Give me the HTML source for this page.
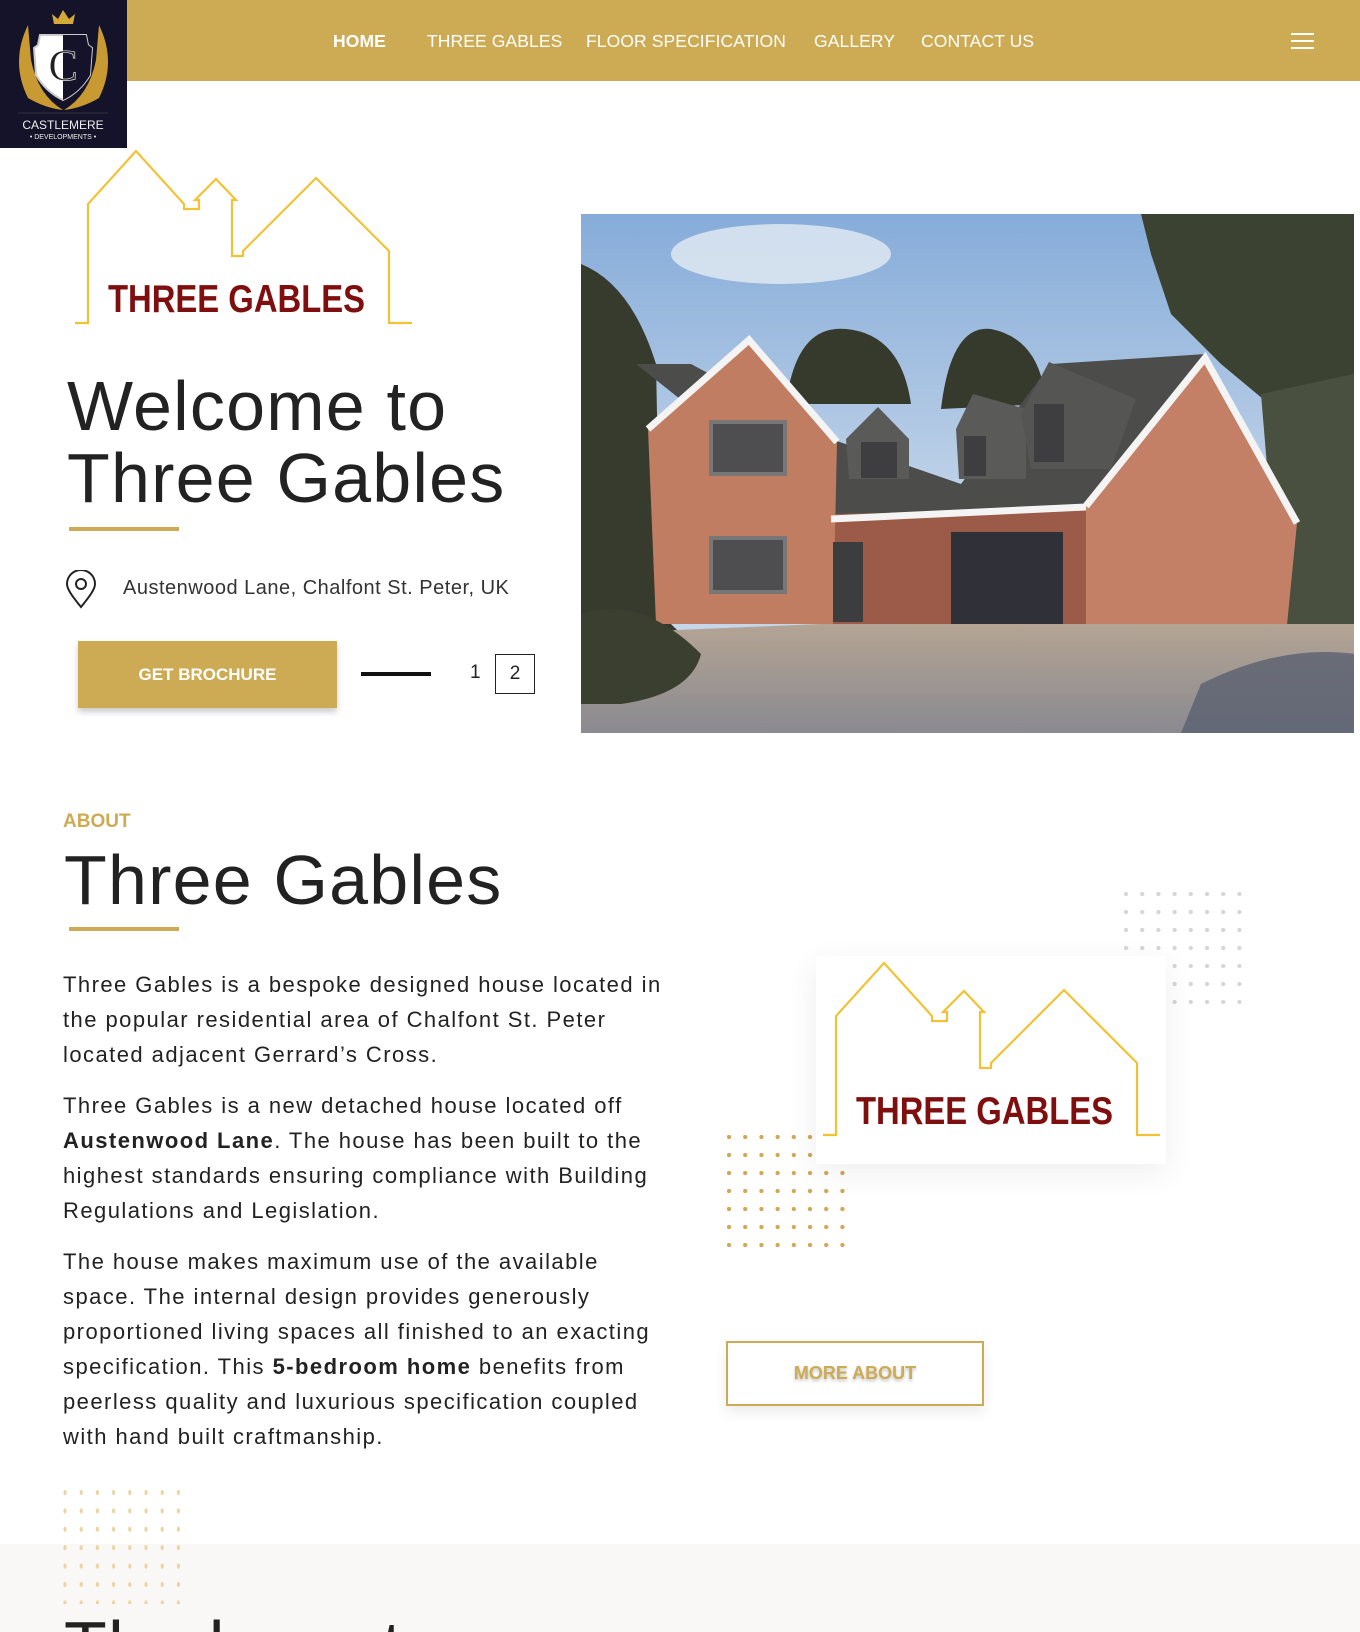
<!DOCTYPE html>
<html><head><meta charset="utf-8">
<style>
*{margin:0;padding:0;box-sizing:border-box}
html,body{width:1360px;height:1632px;overflow:hidden;background:#fff;font-family:"Liberation Sans",sans-serif;color:#222}
#w{position:relative;width:1360px;height:1632px;overflow:hidden}
.abs{position:absolute}
.nav{left:0;top:0;width:1360px;height:81px;background:#cdab55}
.nav a{position:absolute;top:31px;color:#fff;font-size:17.5px;text-decoration:none;letter-spacing:0.1px}
.logo{left:0;top:0;width:127px;height:148px;background:#15132a}
.h1{left:67px;font-size:70px;color:#222;letter-spacing:1.2px;font-weight:normal;white-space:nowrap}
.bar{height:4px;background:#cdab55}
.p{left:63px;font-size:22px;letter-spacing:1.45px;line-height:35px;color:#222;white-space:nowrap}
</style></head><body><div id="w">
<div class="abs nav">
<a style="left:333px;font-weight:bold">HOME</a>
<a style="left:427px">THREE GABLES</a>
<a style="left:586px">FLOOR SPECIFICATION</a>
<a style="left:814px">GALLERY</a>
<a style="left:921px">CONTACT US</a>
<div class="abs" style="left:1291px;top:33px;width:23px;height:2px;background:#fff"></div>
<div class="abs" style="left:1291px;top:40px;width:23px;height:2px;background:#fff"></div>
<div class="abs" style="left:1291px;top:47px;width:23px;height:2px;background:#fff"></div>
</div>
<div class="abs logo">
<svg width="127" height="148" viewBox="0 0 127 148">
<path d="M52 14 L54 24 L73 24 L75 14 L69 19 L63 10 L58 19 Z" fill="#d4a93a"/>
<path d="M28 25 Q10 62 28 98 Q45 108 63 110 Q38 95 31 60 Z" fill="#c99a32"/>
<path d="M99 25 Q117 62 99 98 Q82 108 64 110 Q89 95 96 60 Z" fill="#c99a32"/>
<path d="M40 35 L86 35 L88 45 L92 48 L90 75 Q80 92 63 100 Q46 92 36 75 L34 48 L38 45 Z" fill="#fff" stroke="#ccc" stroke-width="2"/>
<path d="M63 35 L86 35 L88 45 L92 48 L90 75 Q80 92 63 100 Z" fill="#15132a"/>
<text x="63" y="80" font-family="Liberation Serif" font-size="44" fill="#222" text-anchor="middle" stroke="#fff" stroke-width="0.6">C</text>
<line x1="18" y1="113" x2="108" y2="113" stroke="#555" stroke-width="0.6"/>
<text x="63" y="129" font-size="12" fill="#eee" text-anchor="middle">CASTLEMERE</text>
<text x="63" y="139" font-size="7" fill="#eee" text-anchor="middle">• DEVELOPMENTS •</text>
</svg>
</div>

<svg class="abs" style="left:0;top:0" width="1360" height="1632">
<defs>
<g id="tg">
<path d="M75 323 L88 323 L88 204 L136 151 L184 204 L184 209 L199 209 L199 200 L195 200 L216 179 L236 200 L232 200 L232 256 L243 256 L243 251 L316 178 L389 251 L389 323 L412 323" fill="none" stroke="#f3c234" stroke-width="2.2"/>
<text x="108" y="312" font-size="39" font-weight="bold" fill="#7f0e0e" textLength="257" lengthAdjust="spacingAndGlyphs">THREE GABLES</text>
</g>
<pattern id="gd" x="1124" y="892" width="16.2" height="18" patternUnits="userSpaceOnUse"><circle cx="2" cy="2" r="2.2" fill="#d6d6d6"/></pattern>
<pattern id="od" x="727" y="1135" width="16.2" height="18" patternUnits="userSpaceOnUse"><circle cx="2" cy="2" r="2.2" fill="#d4a656"/></pattern>
<pattern id="ld" x="63" y="1490" width="16.2" height="18.4" patternUnits="userSpaceOnUse"><ellipse cx="2" cy="2.5" rx="1.6" ry="2.6" fill="#ecd3a0"/></pattern>
</defs>
<use href="#tg"/>
<rect x="0" y="1544" width="1360" height="88" fill="#f9f8f6"/>
<rect x="1122" y="890" width="120" height="114" fill="url(#gd)"/>
<rect x="725" y="1133" width="120" height="114" fill="url(#od)"/>
<rect x="61" y="1488" width="122" height="116" fill="url(#ld)"/>
</svg>

<div class="abs" style="left:816px;top:956px;width:350px;height:208px;background:#fff;box-shadow:0 8px 30px rgba(0,0,0,0.07)"></div>
<svg class="abs" style="left:0;top:0;pointer-events:none" width="1360" height="1632"><use href="#tg" transform="translate(748,812)"/></svg>

<div class="abs h1" style="top:370px;line-height:72px">Welcome to<br>Three Gables</div>
<div class="abs bar" style="left:69px;top:527px;width:110px"></div>
<svg class="abs" style="left:64px;top:570px" width="34" height="40" viewBox="0 0 34 40"><path d="M17 37 C8 26 3 19 3 14 A14 14 0 0 1 31 14 C31 19 26 26 17 37 Z" fill="none" stroke="#222" stroke-width="2"/><circle cx="17" cy="14" r="5" fill="none" stroke="#222" stroke-width="2"/></svg>
<div class="abs" style="left:123px;top:577px;font-size:20px;letter-spacing:0.5px;color:#333">Austenwood Lane, Chalfont St. Peter, UK</div>
<div class="abs" style="left:78px;top:641px;width:259px;height:67px;background:#cdab55;box-shadow:0 4px 6px rgba(0,0,0,0.2);color:#fff;font-weight:bold;font-size:17px;text-align:center;line-height:67px">GET BROCHURE</div>
<div class="abs" style="left:361px;top:672px;width:70px;height:4px;background:#111"></div>
<div class="abs" style="left:470px;top:662px;font-size:19px;color:#222">1</div>
<div class="abs" style="left:495px;top:654px;width:40px;height:40px;border:1.5px solid #222;font-size:19px;text-align:center;line-height:37px">2</div>

<svg class="abs" style="left:581px;top:214px" width="773" height="519" viewBox="0 0 773 519">
<defs><linearGradient id="sky" x1="0" y1="0" x2="0" y2="1"><stop offset="0" stop-color="#86acd9"/><stop offset="0.6" stop-color="#c5d6ea"/></linearGradient>
<linearGradient id="pav" x1="0" y1="0" x2="0" y2="1"><stop offset="0" stop-color="#b4a494"/><stop offset="1" stop-color="#8a8a90"/></linearGradient></defs>
<rect width="773" height="519" fill="url(#sky)"/>
<ellipse cx="200" cy="40" rx="110" ry="30" fill="#e3ebf3" opacity="0.8"/>
<path d="M560 0 L773 0 L773 230 L700 200 L640 150 L590 100 L570 40 Z" fill="#3c4232"/>
<path d="M680 180 L773 160 L773 420 L700 420 Z" fill="#4a5040"/>
<path d="M205 190 Q215 110 265 115 Q320 120 330 190 Z" fill="#353a2c"/>
<path d="M360 195 Q370 110 410 115 Q460 125 465 190 Z" fill="#353a2c"/>
<path d="M0 50 Q50 70 75 150 L80 400 L120 440 L100 519 L0 519 Z" fill="#363b2e"/>
<path d="M55 150 L110 150 L250 225 L380 270 L470 150 L625 140 L560 280 L505 300 L250 305 Z" fill="#4c4c4a"/>
<path d="M250 300 L505 295 L505 425 L250 410 Z" fill="#9c5a48"/>
<path d="M67 215 L168 126 L256 228 L252 410 L75 410 Z" fill="#c17d62"/>
<path d="M505 292 L624 144 L716 309 L706 411 L505 425 Z" fill="#c48066"/>
<path d="M67 215 L168 126 L256 228 M505 292 L624 144 L716 309 M250 305 L505 293" fill="none" stroke="#f4f4f4" stroke-width="7"/>
<rect x="370" y="318" width="112" height="104" fill="#2f3038"/>
<rect x="252" y="328" width="30" height="80" fill="#3d3d40"/>
<rect x="130" y="208" width="74" height="52" fill="#4e4e50" stroke="#777" stroke-width="4"/>
<rect x="130" y="324" width="74" height="54" fill="#4e4e50" stroke="#777" stroke-width="4"/>
<path d="M265 225 L297 193 L328 225 L328 265 L268 265 Z" fill="#5a5a58"/><rect x="280" y="228" width="36" height="36" fill="#3e3e40"/>
<path d="M375 215 L392 180 L445 195 L445 265 L378 265 Z" fill="#5a5a58"/><rect x="383" y="222" width="22" height="40" fill="#3e3e40"/>
<path d="M440 200 L468 148 L555 185 L530 255 L450 255 Z" fill="#555553"/><rect x="453" y="190" width="30" height="58" fill="#3e3e40"/>
<path d="M0 420 L240 410 L773 410 L773 519 L0 519 Z" fill="url(#pav)"/>
<path d="M620 470 Q700 430 773 440 L773 519 L600 519 Z" fill="#5a6070" opacity="0.8"/>
<path d="M0 400 Q60 380 120 440 Q110 480 40 490 L0 490 Z" fill="#3a3f30"/>
</svg>

<div class="abs" style="left:63px;top:811px;font-size:19px;font-weight:bold;color:#cdab55">ABOUT</div>
<div class="abs h1" style="left:64px;top:840px;line-height:80px">Three Gables</div>
<div class="abs bar" style="left:69px;top:927px;width:110px"></div>

<div class="abs p" style="top:967px">Three Gables is a bespoke designed house located in<br>the popular residential area of Chalfont St. Peter<br>located adjacent Gerrard’s Cross.</div>
<div class="abs p" style="top:1088px">Three Gables is a new detached house located off<br><b>Austenwood Lane</b>. The house has been built to the<br>highest standards ensuring compliance with Building<br>Regulations and Legislation.</div>
<div class="abs p" style="top:1244px">The house makes maximum use of the available<br>space. The internal design provides generously<br>proportioned living spaces all finished to an exacting<br>specification. This <b>5-bedroom home</b> benefits from<br>peerless quality and luxurious specification coupled<br>with hand built craftmanship.</div>

<div class="abs" style="left:726px;top:1341px;width:258px;height:65px;border:2px solid #cdab55;box-shadow:0 6px 12px rgba(0,0,0,0.08);color:#cdab55;font-weight:bold;font-size:18px;text-align:center;line-height:61px;text-shadow:0 2px 3px rgba(0,0,0,0.25)">MORE ABOUT</div>

<div class="abs h1" style="left:64px;top:1606px;line-height:80px">The layout</div>
</div></body></html>
